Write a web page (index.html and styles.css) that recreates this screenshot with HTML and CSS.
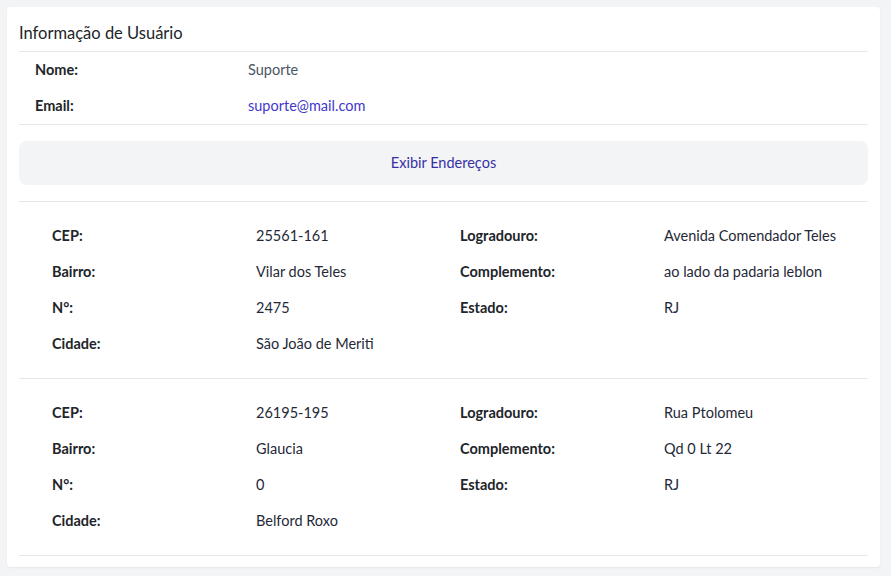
FILE: index.html
```html
<!DOCTYPE html>
<html lang="pt-BR">
<head>
<meta charset="utf-8">
<title>Informação de Usuário</title>
<link rel="stylesheet" href="styles.css">
</head>
<body>
<main class="card">
  <h2 class="card-title">Informação de Usuário</h2>
  <hr class="divider">
  <div class="user-info">
    <div class="user-row"><span class="label">Nome:</span><span class="user-value">Suporte</span></div>
    <div class="user-row"><span class="label">Email:</span><a class="user-link">suporte@mail.com</a></div>
  </div>
  <hr class="divider">
  <button class="toggle-btn" type="button">Exibir Endereços</button>
  <hr class="divider divider-after-btn">
  <section class="address">
    <div class="cell label">CEP:</div><div class="cell value">25561-161</div>
    <div class="cell label">Logradouro:</div><div class="cell value">Avenida Comendador Teles</div>
    <div class="cell label">Bairro:</div><div class="cell value">Vilar dos Teles</div>
    <div class="cell label">Complemento:</div><div class="cell value">ao lado da padaria leblon</div>
    <div class="cell label">N°:</div><div class="cell value">2475</div>
    <div class="cell label">Estado:</div><div class="cell value">RJ</div>
    <div class="cell label">Cidade:</div><div class="cell value">São João de Meriti</div>
  </section>
  <hr class="divider">
  <section class="address">
    <div class="cell label">CEP:</div><div class="cell value">26195-195</div>
    <div class="cell label">Logradouro:</div><div class="cell value">Rua Ptolomeu</div>
    <div class="cell label">Bairro:</div><div class="cell value">Glaucia</div>
    <div class="cell label">Complemento:</div><div class="cell value">Qd 0 Lt 22</div>
    <div class="cell label">N°:</div><div class="cell value">0</div>
    <div class="cell label">Estado:</div><div class="cell value">RJ</div>
    <div class="cell label">Cidade:</div><div class="cell value">Belford Roxo</div>
  </section>
  <hr class="divider">
</main>
</body>
</html>
```
FILE: styles.css
```css
* { box-sizing: border-box; }
html, body { margin: 0; padding: 0; }
body {
  background: #f3f4f6;
  font-family: Lato, "Noto Sans", sans-serif;
  color: #212529;
  padding: 7px 11px 9px 7px;
}
.card {
  background: #fff;
  border-radius: 4px;
  box-shadow: 0 1px 2px rgba(0,0,0,0.06);
  padding: 12px;
  height: 560px;
}
.card-title {
  margin: 0;
  font-size: 16.5px;
  font-weight: 400;
  line-height: 20px;
  padding: 4px 0 8px;
  color: #212529;
}
.divider {
  border: 0;
  border-top: 1px solid #e5e7eb;
  margin: 0;
}
.user-info { padding: 0 0 1px; }
.user-row {
  display: grid;
  grid-template-columns: 213px 1fr;
  padding-left: 16px;
  height: 36px;
  align-items: center;
  font-size: 14.5px;
}
.user-row:first-child { height: 35px; }
.label { font-weight: 700; color: #212529; font-size: 14.5px; }
.user-value { color: #4b5563; }
.user-link { color: #4338ca; text-decoration: none; }
.toggle-btn {
  display: block;
  width: 100%;
  margin: 16px 0;
  height: 44px;
  padding: 0 0 2px;
  border: 0;
  border-radius: 8px;
  background: #f3f4f6;
  color: #3730a3;
  font-family: inherit;
  font-size: 14.5px;
  cursor: pointer;
}
.address {
  display: grid;
  grid-template-columns: repeat(4, 204px);
  grid-auto-rows: 36px;
  padding: 15px 16px 17px 17px;
  align-items: center;
}
.cell { padding-left: 16px; font-size: 14.5px; }
.value { color: #1f2937; }
```
